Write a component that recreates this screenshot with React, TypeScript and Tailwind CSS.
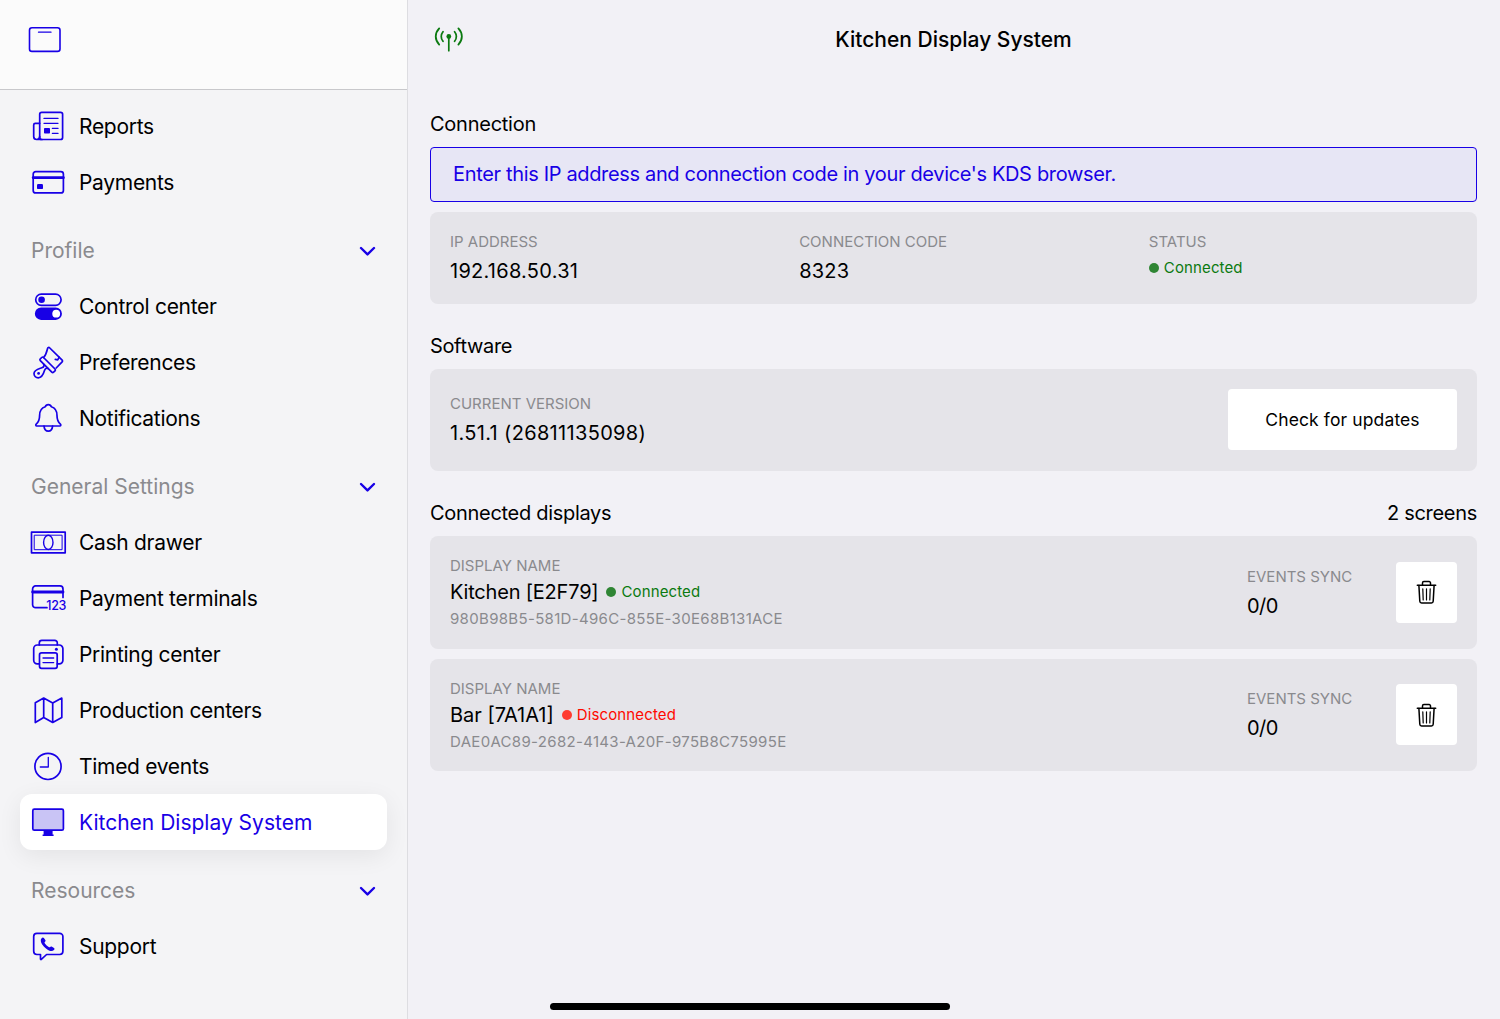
import type { ReactNode } from 'react'

const NAV = [
  {
    title: '',
    items: [
      { icon: 'reports', label: 'Reports' },
      { icon: 'payments', label: 'Payments' },
    ],
  },
  {
    title: 'Profile',
    items: [
      { icon: 'control', label: 'Control center' },
      { icon: 'brush', label: 'Preferences' },
      { icon: 'bell', label: 'Notifications' },
    ],
  },
  {
    title: 'General Settings',
    items: [
      { icon: 'cash', label: 'Cash drawer' },
      { icon: 'terminal', label: 'Payment terminals' },
      { icon: 'printer', label: 'Printing center' },
      { icon: 'map', label: 'Production centers' },
      { icon: 'clock', label: 'Timed events' },
      { icon: 'display', label: 'Kitchen Display System' },
    ],
  },
  {
    title: 'Resources',
    items: [{ icon: 'support', label: 'Support' }],
  },
]

const DISPLAYS = [
  { name: 'Kitchen [E2F79]', id: '980B98B5-581D-496C-855E-30E68B131ACE', connected: true, sync: '0/0' },
  { name: 'Bar [7A1A1]', id: 'DAE0AC89-2682-4143-A20F-975B8C75995E', connected: false, sync: '0/0' },
]

// 40x40 line icons, stroke and fill follow the text colour
const ICONS: Record<string, ReactNode> = {
  reports: (
    <>
      <rect x="11.7" y="5.3" width="22.9" height="27.2" rx="2" />
      <path d="M11.7 16.3H7.3a1.6 1.6 0 0 0-1.6 1.6v11.6a3 3 0 0 0 6 0M8.7 32.5H14" />
      <path d="M16 11.4h14M16 16.3h14M24.4 21.4H30M24.4 26.4H30" strokeWidth="1.3" />
      <rect x="16" y="21" width="6" height="5.6" rx="0.8" fill="currentColor" stroke="none" />
    </>
  ),
  payments: (
    <>
      <rect x="5.2" y="8.7" width="30.2" height="21.2" rx="2.5" />
      <path d="M5.2 14.7h30.2" strokeWidth="2.8" />
      <rect x="9" y="21.1" width="6" height="5" rx="1.2" fill="currentColor" stroke="none" />
    </>
  ),
  control: (
    <>
      <rect x="7.7" y="7.1" width="25.4" height="11.3" rx="5.6" />
      <circle cx="13.6" cy="12.7" r="3.3" fill="currentColor" stroke="none" />
      <rect x="7.7" y="21.3" width="25.4" height="10.8" rx="5.4" fill="currentColor" />
      <circle cx="28.2" cy="26.7" r="3.9" fill="#fff" stroke="none" />
    </>
  ),
  brush: (
    <>
      <path d="M15.5 14.5c2.7-2.6 3.2-5.5 4-8.8.3-1.3 1.4-1.6 2.3-.7L33.9 16.8c.8.8.8 1.5 0 2.3L28.2 25" />
      <path d="M15.5 14.5a1.3 1.3 0 0 0-1.8 0l-1.4 1.4a1.3 1.3 0 0 0 0 1.8l11.5 11.5a1.3 1.3 0 0 0 1.8 0l1.4-1.4a1.3 1.3 0 0 0 0-1.8Z" />
      <path d="M15.6 21.1c1 1.5.2 3-1.8 3.7-3.5 1.2-7.8 2-7.8 5.8 0 2.400 2 4.200 4.300 4.200 3.600 0 5.200-3.800 6.200-7.200.7-2.200 2-2.900 3.500-2M31.200 14.200l-1.500 2.600-2.400-.4" />
      <circle cx="10.600" cy="30.400" r="1.400" fill="currentColor" stroke="none" />
    </>
  ),
  bell: (
    <>
      <path d="M20.3 5.6c-1.5 0-2.6.8-3 2.2-4 1.2-5.7 4.5-5.7 8.7 0 4.7-.7 6.3-3.4 8.7-.7.7-.5 1.8.6 1.8h23c1.1 0 1.3-1.1.6-1.8-2.7-2.4-3.4-4-3.4-8.7 0-4.2-1.7-7.5-5.7-8.7-.4-1.4-1.5-2.2-3-2.2Z" />
      <path d="M16 27.2c.3 3 2 5 4.300 5s4-2 4.300-5" />
    </>
  ),
  cash: (
    <>
      <rect x="3.5" y="9.2" width="33.7" height="20.6" />
      <rect x="6.6" y="12.2" width="27.5" height="14.5" strokeWidth="1" />
      <ellipse cx="20.3" cy="19.4" rx="4.7" ry="7.1" strokeWidth="1.4" />
    </>
  ),
  terminal: (
    <>
      <path d="M19 28.7H7.6a3 3 0 0 1-3-3V9.900a3 3 0 0 1 3-3H32a3 3 0 0 1 3 3V18.500" />
      <path d="M4.600 13H35" strokeWidth="2.8" />
      <text x="18.3" y="30.7" fontSize="12.5" fontWeight="500" fill="currentColor" stroke="none" textLength="19.8">
        123
      </text>
    </>
  ),
  printer: (
    <>
      <path d="M11.3 28.9H9.3a3.6 3.6 0 0 1-3.6-3.6V13.6a3.6 3.6 0 0 1 3.6-3.6h22a3.6 3.6 0 0 1 3.6 3.6v11.7a3.6 3.6 0 0 1-3.6 3.6h-2" />
      <path d="M11.3 9.9V7.9a2.5 2.5 0 0 1 2.5-2.5h13a2.5 2.5 0 0 1 2.5 2.5v2" />
      <rect x="11.5" y="17.9" width="17.7" height="15.4" rx="2" />
      <path d="M15 23h10.7M15 27.6h10.7" strokeWidth="1.3" />
      <circle cx="28.4" cy="14.3" r="1.5" fill="currentColor" stroke="none" />
    </>
  ),
  map: <path d="M7.3 11.7 15.7 7l9 5 9.1-4.9v19.4l-9.1 5-9-5-8.4 5ZM15.7 7v19.500M24.700 12v19.500" />,
  clock: (
    <>
      <circle cx="20" cy="19.4" r="13.1" />
      <path d="M20.3 10.300V20h-8" strokeWidth="1.3" />
    </>
  ),
  display: (
    <>
      <rect x="4.8" y="6.2" width="30.6" height="21" rx="1.5" fill="#c9c4f5" />
      <path d="M15.6 27.500h9v4h1v1.400h-11v-1.400h1Z" fill="currentColor" stroke="none" />
    </>
  ),
  support: (
    <>
      <path d="M8.9 6.300h22.800a3.200 3.200 0 0 1 3.200 3.200v14.800a3.200 3.200 0 0 1-3.200 3.200H18.600l-5.300 4.900c-.3.300-.8.100-.8-.4v-4.500H8.900a3.200 3.200 0 0 1-3.200-3.200V9.500a3.200 3.200 0 0 1 3.200-3.200Z" />
      <path
        d="M13.600 11.200c.8-1 1.700-1 2.300-.2l1.400 2c.5.800.3 1.400-.5 2.100-.4.400-.3.700.1 1.300 1 1.500 2.300 2.800 3.800 3.700.6.400.9.300 1.300-.1.700-.7 1.300-.8 2-.3l2 1.400c.7.600.7 1.300-.1 2-1.800 1.800-4.600 1-7.600-1.300-1.600-1.300-3.100-2.800-4.100-4.400-1.500-2.500-2-4.700-.6-6.200Z"
        fill="currentColor"
        stroke="none"
      />
    </>
  ),
}

function Icon({ name }: { name: string }) {
  return (
    <svg
      viewBox="0 0 40 40"
      className="h-10 w-10 flex-shrink-0 text-[#1800e6]"
      fill="none"
      stroke="currentColor"
      strokeWidth="1.7"
      strokeLinejoin="round"
      strokeLinecap="round"
    >
      {ICONS[name]}
    </svg>
  )
}

function Chevron() {
  return (
    <svg viewBox="0 0 18 12" className="h-3 w-[18px] text-[#1800e6]" fill="none" stroke="currentColor" strokeWidth="2.4" strokeLinecap="round" strokeLinejoin="round">
      <path d="m2 3 6.500 6.400L15 3" />
    </svg>
  )
}

function Trash() {
  return (
    <svg viewBox="0 0 22 26" className="h-[26px] w-[22px]" fill="none" stroke="#000" strokeWidth="1.5" strokeLinecap="round" strokeLinejoin="round">
      <path d="M1.300 6.200h18.400M6.500 6V3.900a1.400 1.400 0 0 1 1.400-1.400h5.200a1.400 1.400 0 0 1 1.400 1.400V6" />
      <path d="m2.900 6.400.9 15.900A1.800 1.800 0 0 0 5.600 24h9.800a1.800 1.800 0 0 0 1.800-1.700l.9-15.900" />
      <path d="m6.800 9.800.4 11.200M10.500 9.800V21M14.200 9.800 13.800 21" strokeWidth="1.200" />
    </svg>
  )
}

function Status({ connected }: { connected: boolean }) {
  return (
    <span className={`flex items-center gap-[5px] text-[15px] leading-5 tracking-[0.13px] ${connected ? 'text-[#0b7a10]' : 'text-[#ff0a00]'}`}>
      <span className={`h-2.5 w-2.5 rounded-full ${connected ? 'bg-[#2f8534]' : 'bg-[#ff3b30]'}`} />
      {connected ? 'Connected' : 'Disconnected'}
    </span>
  )
}

export default function App() {
  const active = 'display'

  return (
    <div className="flex h-[1019px] w-[1500px] overflow-hidden bg-[#f2f1f6] font-['Inter','Liberation_Sans',sans-serif] text-black">
      {/* Sidebar */}
      <aside className="flex w-[408px] flex-shrink-0 flex-col border-r border-[#dddde1] bg-[#f4f4f6]">
        <div className="h-[90px] border-b border-[#c8c8cb] bg-[#fbfbfb] pl-7 pt-[26px]">
          <svg viewBox="0 0 34 28" className="h-7 w-[34px]" fill="none" stroke="#1800e6" strokeWidth="1.6" strokeLinecap="round">
            <rect x="1.5" y="1.8" width="30.5" height="23.6" rx="2.5" />
            <path d="M10.5 6.200H23" strokeWidth="1.3" />
          </svg>
        </div>
        <nav className="px-5 pt-2">
          {NAV.map((section) => (
            <div key={section.title}>
              {section.title && (
                <div className="mt-[12.5px] flex h-14 items-center justify-between pl-[11px] pr-2.5 pt-px">
                  <h2 className="text-[21px] text-[#8a8a8e]">{section.title}</h2>
                  <Chevron />
                </div>
              )}
              {section.items.map((item) => (
                <a
                  key={item.icon}
                  className={`flex h-[55.9px] items-center gap-[11px] rounded-xl pl-2 pt-[1.5px] text-[21px] ${
                    item.icon === active
                      ? 'bg-white text-[#1800e6] shadow-[0_6px_24px_rgba(0,0,0,0.07)]'
                      : 'tracking-[-0.3px]'
                  }`}
                >
                  <Icon name={item.icon} />
                  <span>{item.label}</span>
                </a>
              ))}
            </div>
          ))}
        </nav>
      </aside>

      {/* Content */}
      <main className="flex flex-1 flex-col pl-[22px] pr-[23px]">
        <header className="grid h-20 grid-cols-3 items-center">
          <svg viewBox="0 0 36 28" className="h-7 w-9 text-[#0b7a10]" fill="none" stroke="currentColor" strokeWidth="1.8" strokeLinecap="round">
            <circle cx="18.8" cy="10.5" r="2.4" fill="currentColor" stroke="none" />
            <path d="M18.8 12v12.700" strokeWidth="1.7" />
            <path d="M13 5.800c-2.300 2.800-2.300 6.700 0 9.500M24.600 5.800c2.300 2.800 2.300 6.700 0 9.500M9.200 2.400c-4.600 4.900-4.600 11.300 0 16.200M28.400 2.400c4.600 4.900 4.600 11.300 0 16.200" />
          </svg>
          <h1 className="whitespace-nowrap text-center text-[21px] font-medium">Kitchen Display System</h1>
        </header>

        <h2 className="mt-[30px] text-xl leading-7 tracking-[-0.25px]">Connection</h2>
        <div className="mt-[9px] flex h-[55px] items-center rounded border border-[#1800e6] bg-[#e7e6f5] px-[22px] pb-0.5 text-xl tracking-[-0.34px] text-[#1800e6]">
          Enter this IP address and connection code in your device's KDS browser.
        </div>
        <section className="mt-2.5 grid h-[91.5px] grid-cols-3 rounded-lg bg-[#e5e4e9] px-5 pt-5">
          <div>
            <p className="text-[15px] leading-5 text-[#8a8a8e]">IP ADDRESS</p>
            <p className="mt-[5px] text-xl leading-7 tracking-[0.27px]">192.168.50.31</p>
          </div>
          <div className="pl-[13.5px]">
            <p className="text-[15px] leading-5 text-[#8a8a8e]">CONNECTION CODE</p>
            <p className="mt-[5px] text-xl leading-7 tracking-[0.2px]">8323</p>
          </div>
          <div className="pl-[27.5px]">
            <p className="mb-1.5 text-[15px] leading-5 text-[#8a8a8e]">STATUS</p>
            <Status connected />
          </div>
        </section>

        <h2 className="mt-[28.5px] text-xl leading-7 tracking-[-0.35px]">Software</h2>
        <section className="mt-[9px] flex h-[101.5px] items-center justify-between rounded-lg bg-[#e5e4e9] px-5">
          <div className="pt-0.5">
            <p className="text-[15px] leading-5 text-[#8a8a8e]">CURRENT VERSION</p>
            <p className="mt-[5px] text-xl leading-7 tracking-[0.33px]">1.51.1 (26811135098)</p>
          </div>
          <button className="h-[61px] w-[229px] rounded bg-white text-[17.5px] tracking-[0.12px]">Check for updates</button>
        </section>

        <div className="mt-[28.5px] flex justify-between text-xl leading-7 tracking-[-0.3px]">
          <h2>Connected displays</h2>
          <p>2 screens</p>
        </div>
        <div className="mt-[9px] flex flex-col gap-2.5">
          {DISPLAYS.map((d) => (
            <section key={d.id} className="flex h-[112.5px] items-center rounded-lg bg-[#e5e4e9] px-5">
              <div className="flex-1 pt-px">
                <p className="text-[15px] leading-5 text-[#8a8a8e]">DISPLAY NAME</p>
                <div className="mt-0.5 flex items-center gap-2">
                  <p className={`text-xl leading-7 ${d.connected ? 'tracking-[-0.2px]' : 'tracking-normal'}`}>{d.name}</p>
                  <Status connected={d.connected} />
                </div>
                <p className="mt-[3px] text-[15px] leading-5 tracking-[0.32px] text-[#8a8a8e]">{d.id}</p>
              </div>
              <div className="w-[149px] pt-0.5">
                <p className="text-[15px] leading-5 text-[#8a8a8e]">EVENTS SYNC</p>
                <p className="mt-[5px] text-xl leading-7 tracking-[-0.5px]">{d.sync}</p>
              </div>
              <button className="flex h-[61px] w-[61px] items-center justify-center rounded bg-white">
                <Trash />
              </button>
            </section>
          ))}
        </div>
      </main>

      {/* Home indicator */}
      <div className="absolute left-[550px] top-[1002.5px] h-[7px] w-[400px] rounded-full bg-black" />
    </div>
  )
}
